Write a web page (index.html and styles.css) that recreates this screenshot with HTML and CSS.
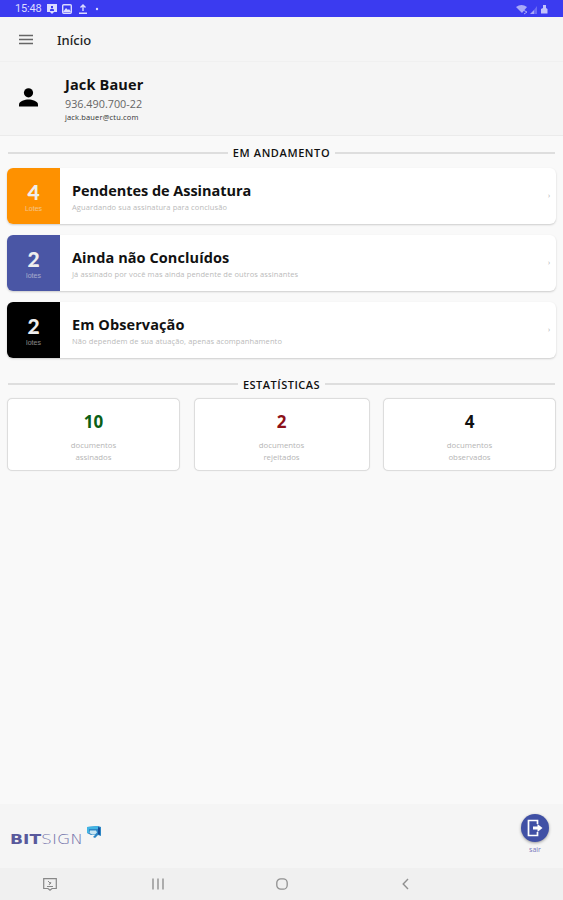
FILE: index.html
```html
<!DOCTYPE html>
<html lang="pt-BR">
<head>
<meta charset="utf-8">
<title>BITSIGN</title>
<link rel="stylesheet" href="styles.css">
</head>
<body>
<div class="status">
  <span class="clock">15:48</span>
  <svg class="st-left" width="56" height="12" viewBox="0 0 56 12">
    <path d="M0 1h10v8H7l-2 2-2-2H0z" fill="#dcdcff"/><path d="M3 8V6.500l2-1 2 1V8zM4 3h2v2H4z" fill="#3b3bf0"/>
    <rect x="15.700" y="1.700" width="8.600" height="8.600" rx="1" fill="none" stroke="#dcdcff" stroke-width="1.400"/><path d="M16 9l3-4 2 2 1-1 2 3z" fill="#dcdcff"/>
    <path d="M36 8V2M33.500 4.500L36 2l2.500 2.500M32 10.300h8" fill="none" stroke="#dcdcff" stroke-width="1.400"/>
    <circle cx="50" cy="6" r="1.200" fill="#dcdcff"/>
  </svg>
  <svg class="st-right" width="34" height="11" viewBox="0 0 34 11">
    <path d="M0 3Q5.500-1 11 3L6 9z" fill="#a9a9f8"/><path d="M7 6l4 2-3 2" fill="none" stroke="#a9a9f8"/>
    <path d="M14 10l4-4v4z" fill="#a9a9f8"/><path d="M18 10V6l3-4v8z" fill="#6b6bf3"/>
    <path d="M25 9.500V5l2-1V1h3v3l1.500 1v4.500z" fill="#c3c3fb"/>
  </svg>
</div>
<header class="bar">
  <svg width="14" height="11" viewBox="0 0 14 11"><path d="M0 1.500h14M0 5.500h14M0 9.500h14" stroke="#666" stroke-width="1.300"/></svg>
  <h1>Início</h1>
</header>
<section class="profile">
  <svg width="19" height="19" viewBox="0 0 19 19"><circle cx="9.500" cy="4.800" r="4.600"/><path d="M0 18.500v-2c0-3.500 6-5 9.500-5s9.500 1.500 9.500 5v2z"/></svg>
  <div class="who"><strong>Jack Bauer</strong><span class="cpf">936.490.700-22</span><span class="mail">jack.bauer@ctu.com</span></div>
</section>
<main>
  <h2 class="rule r1"><span>EM ANDAMENTO</span></h2>
  <div class="lots">
    <article class="lot"><div class="count orange"><b>4</b><small>Lotes</small></div><div class="info"><h3>Pendentes de Assinatura</h3><p>Aguardando sua assinatura para conclusão</p></div><i class="chev">›</i></article>
    <article class="lot"><div class="count indigo"><b>2</b><small>lotes</small></div><div class="info"><h3 class="wide">Ainda não Concluídos</h3><p>Já assinado por você mas ainda pendente de outros assinantes</p></div><i class="chev">›</i></article>
    <article class="lot"><div class="count black"><b>2</b><small>lotes</small></div><div class="info"><h3 class="wide">Em Observação</h3><p>Não dependem de sua atuação, apenas acompanhamento</p></div><i class="chev">›</i></article>
  </div>
  <h2 class="rule second"><span>ESTATÍSTICAS</span></h2>
  <div class="stats">
    <div class="stat"><b class="green">10</b><p>documentos<br>assinados</p></div>
    <div class="stat"><b class="red">2</b><p>documentos<br>rejeitados</p></div>
    <div class="stat"><b>4</b><p>documentos<br>observados</p></div>
  </div>
</main>
<footer>
  <div class="logo"><span class="word"><b>BIT</b><span>SIGN</span></span>
    <svg width="14" height="13" viewBox="0 0 14 13"><path d="M0 1L11 0l3 1v9l-3-1-3 3-2-1 2-2H4L0 7z" fill="#2d86c5"/><path d="M0 1l11-1v3H2v4H0z" fill="#42b5e4"/><path d="M3 4.500h6l1 2-2 2H5L2.500 7z" fill="#c7e5f3"/><path d="M11 1l2 1v7l-2-1z" fill="#174f99"/></svg>
  </div>
  <div class="exit"><span class="fab"><svg width="16" height="18" viewBox="0 0 16 18"><path d="M10.500 5V1.500h-9v15h9V13" fill="none" stroke="#fff" stroke-width="1.700"/><path d="M6 7.500h4.500V5l5 4-5 4v-2.500H6z" fill="#fff"/></svg></span><small>sair</small></div>
</footer>
<nav>
  <svg width="14" height="13" viewBox="0 0 14 13" fill="none" stroke="#888"><path d="M.7.700h12.600v9.800H9L7 12.200 5 10.500H.7z" stroke-width="1.200"/><path d="M5 3l3 3M8 4L6 7M4 8.500h6"/></svg>
  <svg width="12" height="12" viewBox="0 0 12 12"><path d="M1 .5v11M6 .5v11M11 .5v11" stroke="#909090" stroke-width="1.400"/></svg>
  <svg width="12" height="12" viewBox="0 0 12 12"><rect x=".8" y=".8" width="10.400" height="10.400" rx="4" fill="none" stroke="#909090" stroke-width="1.300"/></svg>
  <svg width="7" height="12" viewBox="0 0 7 12"><path d="M6 1L1.200 6 6 11" fill="none" stroke="#909090" stroke-width="1.400"/></svg>
</nav>
</body>
</html>
```
FILE: styles.css
```css
* { box-sizing: border-box; margin: 0; padding: 0; }
body { width: 563px; height: 900px; display: flex; flex-direction: column; background: #f9f9f9; font-family: "Open Sans", "Noto Sans", sans-serif; color: #111; overflow: hidden; }
svg { display: block; flex: none; }
.status { height: 17px; flex: none; background: #3b3bf0; display: flex; align-items: center; padding: 1px 13px 0 15px; }
.clock { width: 32px; font: 11px/14px Roboto, sans-serif; color: #dcdcff; letter-spacing: -.2px; }
.st-right { margin-left: auto; }
.bar { height: 45px; flex: none; background: #f5f5f5; border-bottom: 1px solid #f0f0f0; display: flex; align-items: center; padding: 1px 0 0 19px; gap: 24px; }
.bar h1 { font: 500 13px/18px "Noto Sans", sans-serif; color: #222; }
.profile { height: 74px; flex: none; background: #f5f5f5; border-bottom: 1px solid #ebebeb; display: flex; padding: 13px 0 0 19px; gap: 27px; }
.profile svg { margin-top: 13px; }
.who { display: flex; flex-direction: column; }
.who strong { font-size: 14.500px; line-height: 20px; font-weight: 700; letter-spacing: .15px; }
.cpf { font-size: 10.800px; line-height: 18px; color: #666; }
.mail { font-size: 7.500px; line-height: 9px; color: #333; letter-spacing: .15px; }
main { flex: 1; padding: 9px 7px 0; }
.rule { display: flex; align-items: center; gap: 5px; height: 16px; padding: 0 1px; font-size: 11px; line-height: 15px; font-weight: 600; letter-spacing: .5px; }
.r1 { letter-spacing: .6px; }
.rule::before, .rule::after { content: ""; flex: 1; height: 2px; margin-bottom: 1px; background: #dedede; }
.r1 span { margin-top: -1px; }
.second { margin-top: 18px; }
.lots { display: grid; gap: 11px; margin-top: 7px; }
.lot { height: 56px; display: flex; background: #fff; border-radius: 6px; overflow: hidden; box-shadow: 0 1px 2px #ccc; align-items: center; }
.count { width: 53px; height: 56px; display: flex; flex-direction: column; align-items: center; padding-top: 11px; color: #eee; }
.count b { font: 900 21px/25px Lato, sans-serif; }
.count small { font: 7px/8px "Liberation Sans", sans-serif; opacity: .55; margin-top: 1px; }
.orange { background: #fe9100; }
.indigo { background: #4a56a5; }
.black { background: #000; }
.info { flex: 1; padding: 2px 0 0 12px; white-space: nowrap; }
.info h3 { font-size: 14.500px; line-height: 20px; font-weight: 700; letter-spacing: -.04px; }
.info .wide { letter-spacing: .08px; }
.info p { font-size: 7.500px; line-height: 12px; color: #bababa; letter-spacing: .11px; }
.chev { font: 7px/8px "Open Sans", sans-serif; color: #aaa; margin-right: 6px; }
.stats { display: grid; grid-template-columns: 173px 176px 173px; justify-content: space-between; margin-top: 6px; }
.stat { height: 73px; border: 1px solid #ddd; border-radius: 5px; background: #fff; text-align: center; padding-top: 10px; box-shadow: 0 0 1px #ddd; }
.stat b { display: block; font-size: 17px; line-height: 25px; }
.stat p { font-size: 7.800px; line-height: 12px; color: #b5b5b5; margin-top: 5px; }
.green { color: #0b5f16; }
.red { color: #8d1118; }
footer { height: 64px; flex: none; background: #f5f5f5; display: flex; justify-content: space-between; padding: 10px 14px 0 11px; }
.logo { display: flex; padding-top: 12px; gap: 2px; color: #59599c; }
.word { width: 74px; display: flex; margin-left: -1px; margin-right: 1px; padding-top: 3px; font: 14.500px/20px "DejaVu Sans", sans-serif; transform: scaleX(1.18); transform-origin: left; }
.word span { font-weight: 200; color: #7474ab; }
.exit { width: 28px; display: flex; flex-direction: column; align-items: center; }
.fab { width: 28px; height: 28px; border-radius: 50%; background: #4050a5; display: grid; place-items: center; box-shadow: 0 1px 3px #999; }
.exit small { font-size: 7px; line-height: 9px; margin-top: 3px; color: #7676ba; }
nav { height: 32px; flex: none; background: #f0f0f0; display: grid; grid-template-columns: 99px 118px 130px 117px; align-items: center; justify-items: center; }
```
